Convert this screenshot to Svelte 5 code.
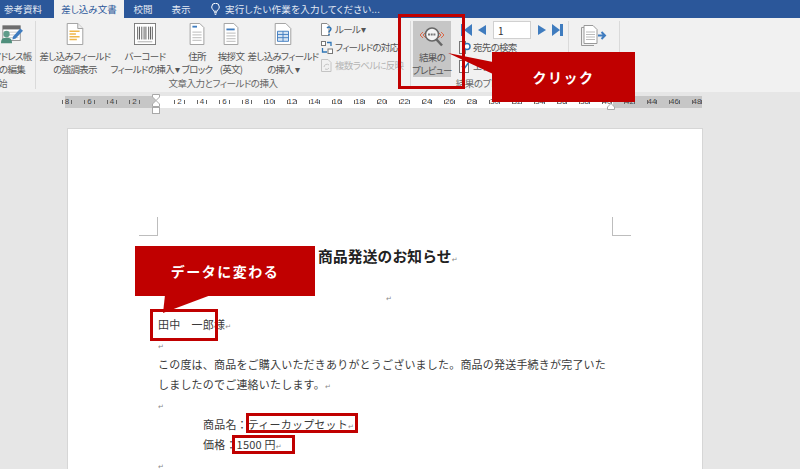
<script>
  const tabs = [
    { name: '参考資料', w: 54 },
    { name: '差し込み文書', w: 70, active: true },
    { name: '校閲', w: 38 },
    { name: '表示', w: 38 }
  ]
  const rulerMarks = [8, 6, 4, 2, '']
  for (let n = 2; n <= 48; n += 2) rulerMarks.push(n)
</script>

<div class="screen">
  <nav class="tabs">
    {#each tabs as tab}
      <span class="tab" class:active={tab.active} style="width:{tab.w}px">{tab.name}</span>
    {/each}
    <svg class="bulb" width="9" height="12" viewBox="0 0 9 12" fill="none" stroke="#fff" stroke-width="1">
      <path d="M2.8 8.2C2.6 6.8 .7 6 .7 4A3.8 3.8 0 0 1 8.3 4C8.3 6 6.400 6.800 6.200 8.200Z" />
      <path d="M3 9.800H6M3.700 11.300H5.300" />
    </svg>
    <span class="tell">実行したい作業を入力してください...</span>
  </nav>

  <section class="ribbon">
    <div class="group g-start">
      <div class="btns">
        <div class="big" style="width:38px">
          <svg class="icon" width="24" height="24" viewBox="0 0 24 24">
            <rect x="2" y="3" width="19" height="16" fill="#fff" stroke="#8a8a8a" />
            <rect x="2" y="3" width="19" height="4" fill="#6d6d6d" />
            <path d="M5 10H19M5 13H19M5 16H19" stroke="#c4c4c4" />
            <circle cx="6" cy="12" r="3.500" fill="#5f9c8a" />
            <path d="M0 22C0 17 2 16 6 16S12 17 12 22Z" fill="#4f8f7c" />
            <path d="M13 15L21 6L24 8.500L16 17L12.500 18Z" fill="#3f7cbf" />
          </svg>
          <span>アドレス帳<br />の編集</span>
        </div>
      </div>
      <div class="glabel right">差し込み開始</div>
    </div>

    <div class="group g-fields">
      <div class="btns">
        <div class="big" style="width:72px">
          <svg class="icon" width="18" height="24" viewBox="0 0 18 24">
            <path d="M.5 .5H12L17.500 6V23.500H.5Z" fill="#fff" stroke="#9a9a9a" />
            <path d="M12 .5V6H17.500" fill="#eee" stroke="#9a9a9a" />
            <path d="M3 9H14M3 12H10M3 15H14M3 18H11" stroke="#f0b74a" stroke-width="1.500" />
          </svg>
          <span>差し込みフィールド<br />の強調表示</span>
        </div>
        <div class="big" style="width:68px">
          <svg class="icon" width="24" height="24" viewBox="0 0 24 24">
            <rect x=".5" y=".5" width="23" height="23" fill="#fff" stroke="#777" />
            <path d="M4 4V18M6 4V18M8.500 4V18M11 4V18M13 4V18M16 4V18M18 4V18M20 4V18" stroke="#555" />
            <path d="M4 20.500H20" stroke="#aaa" />
          </svg>
          <span>バーコード<br />フィールドの挿入 ▾</span>
        </div>
        <div class="big" style="width:36px">
          <svg class="icon" width="16" height="24" viewBox="0 0 16 24">
            <path d="M.5 .5H11L15.500 5V23.500H.5Z" fill="#fff" stroke="#9a9a9a" />
            <path d="M3 4H8" stroke="#3f7cbf" stroke-width="2" />
            <path d="M3 10H13M3 13H13M3 16H13M3 19H13" stroke="#c9c9c9" stroke-width="1.500" />
          </svg>
          <span>住所<br />ブロック</span>
        </div>
        <div class="big" style="width:32px">
          <svg class="icon" width="16" height="24" viewBox="0 0 16 24">
            <path d="M.5 .5H11L15.500 5V23.500H.5Z" fill="#fff" stroke="#9a9a9a" />
            <path d="M3 7H12" stroke="#3f7cbf" stroke-width="2" />
            <path d="M3 11H13M3 14H13M3 17H13M3 20H13" stroke="#c9c9c9" stroke-width="1.500" />
          </svg>
          <span>挨拶文<br />(英文)</span>
        </div>
        <div class="big" style="width:72px">
          <svg class="icon" width="18" height="24" viewBox="0 0 18 24">
            <path d="M.5 .5H12L17.500 6V23.500H.5Z" fill="#fff" stroke="#9a9a9a" />
            <path d="M3 9H15V20H3ZM3 12.500H15M3 16H15M9 9V20" fill="#d6e4f3" stroke="#3f7cbf" />
          </svg>
          <span>差し込みフィールド<br />の挿入 ▾</span>
        </div>
        <div class="smalls">
          <div class="small">
            <svg width="12" height="13" viewBox="0 0 12 13" fill="none">
              <path d="M.5 .5H6L8 2.500V12.500H.5Z" fill="#fff" stroke="#8a8a8a" />
              <path d="M6 5C8 3 11 4.500 9.500 7C8.800 8 8 8.300 8 9.500M8 11V12.500" stroke="#2f75b5" stroke-width="1.500" />
            </svg>
            <span>ルール ▾</span>
          </div>
          <div class="small">
            <svg width="12" height="13" viewBox="0 0 12 13" fill="none" stroke="#777">
              <rect x=".5" y=".5" width="4" height="4" fill="#fff" />
              <rect x="7" y="8" width="4.500" height="4.500" fill="#fff" />
              <path d="M6 1.500H10V5M6 11H1.500V7" stroke="#2f75b5" stroke-width="1.300" />
            </svg>
            <span>フィールドの対応</span>
          </div>
          <div class="small off">
            <svg width="12" height="13" viewBox="0 0 12 13" fill="none" stroke="#c4c4c4">
              <path d="M.5 .5H7L10 3.500V12.500H.5Z" />
              <path d="M3 8A3 3 0 0 1 8 6M8 9A3 3 0 0 1 4 10" />
            </svg>
            <span>複数ラベルに反映</span>
          </div>
        </div>
      </div>
      <div class="glabel">文章入力とフィールドの挿入</div>
    </div>

    <div class="group g-preview">
      <div class="btns">
        <div class="big on">
          <svg class="icon" width="28" height="22" viewBox="0 0 28 22" fill="none">
            <path d="M5 6L2 9L5 12M8 6L5 9L8 12M20 6L23 9L20 12M23 6L26 9L23 12" stroke="#d9694a" />
            <circle cx="14" cy="8.500" r="6.500" fill="#f4f4f4" stroke="#666" stroke-width="1.500" />
            <path d="M18.500 13.500L24 19.500" stroke="#666" stroke-width="2.500" />
            <path d="M10 8.500H18" stroke="#777" stroke-width="2" stroke-dasharray="2 .7" />
          </svg>
          <span>結果の<br />プレビュー</span>
        </div>
        <div class="records">
          <div class="pager">
            <svg width="11" height="12" viewBox="0 0 11 12" fill="#3f7cbf"><path d="M0 0H3V12H0ZM11 0V12L3 6Z" /></svg>
            <svg width="8" height="12" viewBox="0 0 8 12" fill="#3f7cbf"><path d="M8 1V11L0 6Z" /></svg>
            <span class="record">1</span>
            <svg width="8" height="12" viewBox="0 0 8 12" fill="#3f7cbf"><path d="M0 1V11L8 6Z" /></svg>
            <svg width="11" height="12" viewBox="0 0 11 12" fill="#3f7cbf"><path d="M0 0V12L8 6ZM8 0H11V12H8Z" /></svg>
          </div>
          <div class="small">
            <svg width="12" height="13" viewBox="0 0 12 13" fill="none">
              <rect x=".5" y=".5" width="6" height="12" stroke="#777" />
              <circle cx="8" cy="5.500" r="3" fill="#fff" stroke="#2f75b5" stroke-width="1.500" />
            </svg>
            <span>宛先の検索</span>
          </div>
          <div class="small">
            <svg width="12" height="13" viewBox="0 0 12 13" fill="none">
              <rect x=".5" y=".5" width="9" height="12" fill="#fff" stroke="#777" />
              <path d="M3 6L5 9L10 2" stroke="#2f75b5" stroke-width="1.500" />
            </svg>
            <span>エラーのチェック</span>
          </div>
        </div>
      </div>
      <div class="glabel">結果のプレビュー</div>
    </div>

    <div class="group g-finish">
      <div class="btns">
        <svg class="finish" width="26" height="21" viewBox="0 0 26 21" fill="none">
          <path d="M.5 2.500H3M.5 2.500V20.500H13" stroke="#999" />
          <path d="M3 .5H12L16 4.500V18.500H3Z" fill="#fff" stroke="#999" />
          <path d="M5 7H14M5 9.500H14M5 12H14M5 14.500H14" stroke="#bbb" />
          <path d="M17 10.500H24M20.500 7L24 10.500L20.500 14" stroke="#3f7cbf" stroke-width="2" />
        </svg>
      </div>
    </div>
  </section>

  <div class="ruler">
    {#each rulerMarks as mark}
      <span class="tick" class:blank-tick={mark === ''}>{mark}</span>
    {/each}
    <svg class="indent left" width="8" height="20" viewBox="0 0 8 20" fill="#fff" stroke="#a8a8a8">
      <path d="M.5 .5H7.500V3L4 6.500L.5 3Z" />
      <path d="M4 6.500L7.500 10V12.500H.5V10Z" />
      <rect x=".5" y="13.500" width="7" height="6" />
    </svg>
    <svg class="indent right" width="8" height="7" viewBox="0 0 8 7" fill="#fff" stroke="#a8a8a8">
      <path d="M4 .5L7.500 4V6.500H.5V4Z" />
    </svg>
  </div>

  <main class="page">
    <i class="crop crop-l"></i>
    <i class="crop crop-r"></i>
    <h1>商品発送のお知らせ<b class="ret">↵</b></h1>
    <p class="center"><b class="ret">↵</b></p>
    <p class="name">田中　一郎様<b class="ret">↵</b></p>
    <p><b class="ret">↵</b></p>
    <p>この度は、商品をご購入いただきありがとうございました。商品の発送手続きが完了いたしましたのでご連絡いたします。<b class="ret">↵</b></p>
    <p><b class="ret">↵</b></p>
    <p class="item">商品名：ティーカップセット<b class="ret">↵</b></p>
    <p class="item">価格：1500 円<b class="ret">↵</b></p>
    <p><b class="ret">↵</b></p>
  </main>

  <!-- annotations -->
  <i class="mark mark-preview"></i>
  <i class="mark mark-name"></i>
  <i class="mark mark-item"></i>
  <i class="mark mark-price"></i>

  <div class="callout callout-click">クリック</div>
  <div class="callout callout-data">データに変わる</div>
  <svg class="tails" width="800" height="469" viewBox="0 0 800 469" fill="#c00000">
    <path d="M448 53L493 62V74Z" />
    <path d="M163 313L165 295H211Z" />
  </svg>
</div>

<style>
  :global(body) {
    margin: 0;
    background: #e6e6e6;
  }

  .screen {
    position: relative;
    width: 800px;
    height: 469px;
    overflow: hidden;
    background: #e6e6e6;
    color: #444;
    font-family: "Noto Sans CJK JP", "Noto Sans", sans-serif;
    font-size: 10px;
  }

  .tabs {
    display: flex;
    align-items: center;
    height: 18px;
    background: #2b579a;
    color: #e4eaf4;
    font-size: 9.5px;
    font-feature-settings: "palt";
  }

  .tab {
    text-align: center;
    line-height: 18px;
  }

  .tab:first-child {
    text-align: left;
    padding-left: 4px;
    box-sizing: border-box;
  }

  .tab.active {
    background: #f1f1f1;
    color: #2b579a;
  }

  .bulb {
    margin-left: 11px;
  }

  .tell {
    margin-left: 5px;
    letter-spacing: .3px;
  }

  .ribbon {
    display: flex;
    height: 74px;
    background: #f1f1f1;
    font-size: 9.5px;
    font-feature-settings: "palt";
    letter-spacing: -.7px;
    line-height: 13px;
    color: #555;
  }

  .group {
    display: flex;
    flex-direction: column;
    margin: 3px 0;
    border-right: 1px solid #dadada;
    box-sizing: border-box;
    overflow: hidden;
  }

  .btns {
    display: flex;
    height: 55px;
  }

  .glabel {
    text-align: center;
    line-height: 14px;
    color: #666;
    white-space: nowrap;
    letter-spacing: -.5px;
  }

  .glabel.right {
    display: flex;
    justify-content: flex-end;
    padding-right: 28px;
  }

  .g-start {
    width: 36px;
  }

  .g-start .btns {
    justify-content: flex-end;
    padding-right: 4px;
  }

  .g-fields {
    width: 375px;
  }

  .g-fields .btns {
    padding-left: 3px;
  }

  .g-preview {
    width: 158px;
  }

  .g-finish {
    width: 51px;
  }

  .big {
    display: flex;
    flex-direction: column;
    align-items: center;
    flex: none;
    text-align: center;
    white-space: nowrap;
    padding-top: 2px;
  }

  .big .icon {
    height: 24px;
    margin-bottom: 5px;
  }

  .big.on {
    width: 38px;
    height: 56px;
    margin-left: 2px;
    background: #c6c6c6;
    padding-top: 5px;
    box-sizing: border-box;
  }

  .big.on .icon {
    height: 22px;
    margin-bottom: 3px;
  }

  .smalls {
    display: flex;
    flex-direction: column;
    gap: 4px;
    margin: 1px 0 0 2px;
  }

  .small {
    display: flex;
    align-items: center;
    gap: 2px;
    height: 14px;
    white-space: nowrap;
  }

  .small.off {
    color: #b4b4b4;
  }

  .records {
    display: flex;
    flex-direction: column;
    margin-left: 8px;
  }

  .records .small {
    margin-bottom: 6px;
  }

  .pager {
    display: flex;
    align-items: center;
    gap: 6px;
    height: 18px;
    margin: 0 0 2px 2px;
  }

  .record {
    width: 38px;
    height: 18px;
    margin: 0 1px;
    padding-left: 4px;
    box-sizing: border-box;
    background: #fff;
    border: 1px solid #d0d0d0;
    color: #333;
    font-size: 10px;
    line-height: 17px;
  }

  .finish {
    margin: 4px 0 0 12px;
  }

  .ruler {
    position: relative;
    display: flex;
    width: 637px;
    height: 12px;
    margin: 4px 0 0 65px;
    background: linear-gradient(90deg, #c6c6c6 91px, #fff 91px, #fff 548px, #c6c6c6 548px);
  }

  .tick {
    flex: none;
    position: relative;
    left: -9.25px;
    width: 22.5px;
    text-align: center;
    font-family: "Liberation Sans", sans-serif;
    font-size: 8px;
    line-height: 12px;
    color: #444;
  }

  .tick::before,
  .tick::after {
    content: "";
    position: absolute;
    top: 4px;
    width: 1px;
    height: 4px;
    background: #666;
  }

  .tick::before {
    left: 6px;
  }

  .tick::after {
    right: 6px;
  }

  .blank-tick::before,
  .blank-tick::after {
    display: none;
  }

  .indent {
    position: absolute;
  }

  .indent.left {
    left: 87px;
    top: -2px;
  }

  .indent.right {
    left: 542px;
    top: 7px;
  }

  .page {
    position: relative;
    width: 636px;
    height: 400px;
    margin: 20px 0 0 67px;
    padding: 117px 94px 0 90px;
    box-sizing: border-box;
    background: #fff;
    border: 1px solid #d6d6d6;
    color: #3a3a3a;
    font-size: 11px;
    letter-spacing: .2px;
    line-height: 20px;
  }

  .page h1 {
    margin: 0 0 20px;
    padding-left: 160px;
    font-size: 14.7px;
    line-height: 20px;
    color: #222;
  }

  .page p {
    margin: 0;
  }

  .center {
    padding-left: 228px;
  }

  .page .name {
    margin-top: 8px;
  }

  .item {
    padding-left: 45px;
  }

  .ret {
    font-family: "DejaVu Sans", sans-serif;
    font-weight: normal;
    font-size: 7px;
    line-height: 1;
    color: #888;
  }

  .crop {
    position: absolute;
    top: 88px;
    width: 18px;
    height: 18px;
    border-bottom: 1px solid #bdbdbd;
  }

  .crop-l {
    left: 71px;
    border-right: 1px solid #bdbdbd;
  }

  .crop-r {
    left: 544px;
    border-left: 1px solid #bdbdbd;
  }

  .mark {
    position: absolute;
    box-sizing: border-box;
    border: 3px solid #c00000;
  }

  .mark-preview {
    left: 398px;
    top: 14px;
    width: 67px;
    height: 75px;
  }

  .mark-name {
    left: 150px;
    top: 309px;
    width: 68px;
    height: 32px;
  }

  .mark-item {
    left: 246px;
    top: 413px;
    width: 112px;
    height: 20px;
  }

  .mark-price {
    left: 232px;
    top: 435px;
    width: 63px;
    height: 19px;
  }

  .callout {
    position: absolute;
    display: flex;
    align-items: center;
    justify-content: center;
    height: 50px;
    background: #c00000;
    color: #fff;
    font-size: 14px;
    font-weight: bold;
    letter-spacing: 1.5px;
  }

  .callout-click {
    left: 492px;
    top: 52px;
    width: 143px;
  }

  .callout-data {
    left: 135px;
    top: 246px;
    width: 180px;
  }

  .tails {
    position: absolute;
    left: 0;
    top: 0;
  }
</style>
